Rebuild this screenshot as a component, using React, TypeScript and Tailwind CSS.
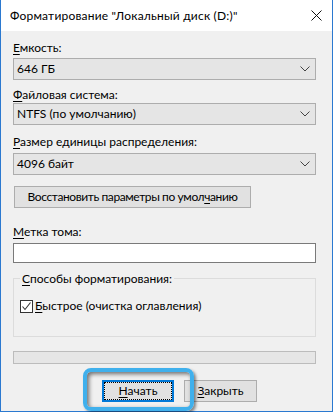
import React from "react";

const U = ({ children }: { children: React.ReactNode }) => (
  <span className="underline underline-offset-[2px] decoration-[1px]">{children}</span>
);

const Chevron = () => (
  <svg width="10" height="6" viewBox="0 0 10 6" className="mr-[5px]">
    <polyline points="0.5,0.5 5,5 9.5,0.5" fill="none" stroke="#444" strokeWidth="1" />
  </svg>
);

const Combo = ({ value, mt }: { value: string; mt: string }) => (
  <div className={`${mt} h-[22px] w-[303px] bg-[#e5e5e5] border border-[#adadad] flex items-center justify-between pl-[3px]`}>
    <span className="whitespace-nowrap">{value}</span>
    <Chevron />
  </div>
);

export default function App() {
  return (
    <div
      className="relative w-[333px] h-[412px] bg-[#f0f0f0] border-l border-r border-b border-[#2b79d0] text-[12px] leading-[16px] text-black whitespace-nowrap"
      style={{ fontFamily: 'Lato, Roboto, "Noto Sans", sans-serif' }}
    >
      <div className="h-[31px] bg-white flex items-center justify-between pl-[9px] pr-[10px]">
        <span className="tracking-[0.2px]">Форматирование "Локальный диск (D:)"</span>
        <svg width="11" height="11" viewBox="0 0 11 11">
          <path d="M0.5 0.5 L10.5 10.5 M10.5 0.5 L0.5 10.5" stroke="#111" strokeWidth="1" />
        </svg>
      </div>
      <div className="flex flex-col pl-[12px]">
        <div className="mt-[9px] h-[16px]">
          <U>Е</U>мкость:
        </div>
        <Combo value="646 ГБ" mt="mt-[2px]" />
        <div className="mt-[7px] h-[16px]">
          <U>Ф</U>айловая система:
        </div>
        <Combo value="NTFS (по умолчанию)" mt="mt-0" />
        <div className="mt-[9px] h-[16px]">
          <U>Р</U>азмер единицы распределения:
        </div>
        <Combo value="4096 байт" mt="mt-[3px]" />
        <div className="mt-[11px] ml-[1px] h-[22px] w-[237px] bg-[#e1e1e1] border border-[#adadad] flex items-center justify-center">
          <span className="tracking-[-0.4px]">
            Восстановить параметры по умол<U>ч</U>анию
          </span>
        </div>
        <div className="mt-[16px] h-[16px]">
          <U>М</U>етка тома:
        </div>
        <div className="mt-[3px] h-[20px] w-[303px] bg-white border border-[#7a7a7a]" />
        <div className="relative mt-[15px] h-[59px] w-[303px] border border-[#dcdcdc]">
          <div className="absolute left-[6px] top-[-8px] px-[2px] bg-[#f0f0f0] leading-[16px]">
            <U>С</U>пособы форматирования:
          </div>
          <div className="mt-[19px] ml-[6px] flex items-center">
            <div className="w-[13px] h-[13px] bg-white border border-[#333] flex items-center justify-center">
              <svg width="11" height="11" viewBox="0 0 11 11">
                <polyline points="1.5,5.5 4,8.5 9.5,1.5" fill="none" stroke="#333" strokeWidth="1.1" />
              </svg>
            </div>
            <span className="ml-[2px]">
              <U>Б</U>ыстрое (очистка оглавления)
            </span>
          </div>
        </div>
        <div className="mt-[14px] h-[13px] w-[303px] bg-[#e6e6e6] border border-[#bcbcbc]" />
        <div className="mt-[16px] ml-[89px] flex gap-[10px]">
          <div className="h-[22px] w-[72px] bg-[#e1e1e1] border-2 border-[#0078d7] p-0">
            <div className="w-full h-full border border-dotted border-black flex items-center justify-center">
              <span>
                <U>Н</U>ачать
              </span>
            </div>
          </div>
          <div className="h-[22px] w-[73px] bg-[#e1e1e1] border border-[#adadad] flex items-center justify-center">
            <span>
              <U>З</U>акрыть
            </span>
          </div>
        </div>
      </div>
      <div className="absolute left-[82px] top-[368px] w-[111px] h-[43px] rounded-[8px] border-[4px] border-[#40b0ec] shadow-[inset_2px_2px_4px_rgba(0,0,0,0.55),2px_2px_3px_rgba(0,0,0,0.45)]" />
    </div>
  );
}
